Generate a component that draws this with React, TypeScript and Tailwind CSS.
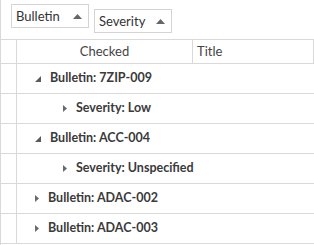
import React from "react";

type Row = {
  label: string;
  level: number;
  expanded: boolean;
};

const rows: Row[] = [
  { label: "Bulletin: 7ZIP-009", level: 0, expanded: true },
  { label: "Severity: Low", level: 1, expanded: false },
  { label: "Bulletin: ACC-004", level: 0, expanded: true },
  { label: "Severity: Unspecified", level: 1, expanded: false },
  { label: "Bulletin: ADAC-002", level: 0, expanded: false },
  { label: "Bulletin: ADAC-003", level: 0, expanded: false },
];

const font = { fontFamily: '"Lato", "Open Sans", sans-serif' };

const SortUp = () => (
  <svg width="9" height="5" viewBox="0 0 9 5" className="shrink-0">
    <polygon points="4.5,0 9,5 0,5" fill="#666" />
  </svg>
);

const Expanded = () => (
  <svg width="6" height="6" viewBox="0 0 6 6" className="shrink-0">
    <polygon points="6,0 6,6 0,6" fill="#5a5a5a" />
  </svg>
);

const Collapsed = () => (
  <svg width="4" height="7" viewBox="0 0 4 7" className="shrink-0">
    <polygon points="0,0 4,3.5 0,7" fill="#6a6a6a" />
  </svg>
);

const GroupChip: React.FC<{ title: string; className: string }> = ({ title, className }) => (
  <div
    className={`flex items-center justify-between w-[78px] h-[24px] pl-[4px] pr-[6px] border border-[#d4d4d4] bg-white text-[13px] text-[#333] ${className}`}
  >
    <span className="leading-none">{title}</span>
    <SortUp />
  </div>
);

export default function App() {
  return (
    <div className="w-[314px] h-[245px] bg-white overflow-hidden border-l border-[#d9d9d9]" style={font}>
      <div className="flex items-start h-[39px]">
        <GroupChip title="Bulletin" className="ml-[10px] mt-[4px]" />
        <GroupChip title="Severity" className="ml-[5px] mt-[9px]" />
      </div>

      <div className="w-[313px]">
        <div className="flex h-[25px] border-t border-b border-r border-[#d9d9d9] text-[13px] text-[#444]">
          <div className="w-[16px] border-r border-[#d9d9d9]" />
          <div className="w-[176px] border-r border-[#d9d9d9] flex items-center justify-center">Checked</div>
          <div className="flex-1 flex items-center pl-[4px]">Title</div>
        </div>

        {rows.map((r) => (
          <div key={r.label} className="flex h-[30px] border-b border-[#d9d9d9]">
            <div className="w-[16px] border-r border-[#d9d9d9]" />
            <div
              className={`flex items-center gap-[9px] text-[12.5px] font-bold text-[#3a3a3a] ${
                r.level === 0 ? "pl-[18px]" : "pl-[46px]"
              }`}
            >
              {r.expanded ? <Expanded /> : <Collapsed />}
              <span>{r.label}</span>
            </div>
          </div>
        ))}
      </div>
    </div>
  );
}
